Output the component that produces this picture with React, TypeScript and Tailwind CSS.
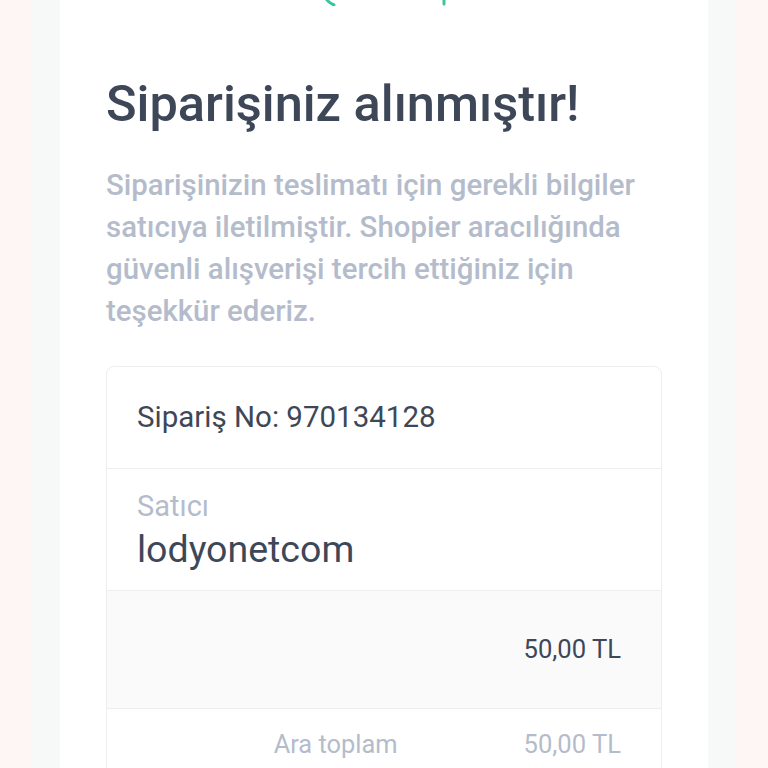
const ORDER = {
  no: '970134128',
  seller: 'lodyonetcom',
  price: '50,00 TL',
  subtotal: '50,00 TL',
};

function Logo() {
  return (
    <svg width="140" height="40" viewBox="0 0 140 40" className="-mt-[34px] mx-auto block" aria-hidden>
      <path d="M10 20 Q8 34 20 39" fill="none" stroke="#3cc3a0" strokeWidth="3" strokeLinecap="round" />
      <path d="M130 32 L130 38" fill="none" stroke="#3cc3a0" strokeWidth="3" strokeLinecap="round" />
    </svg>
  );
}

export default function App() {
  return (
    <div className="min-h-[768px] bg-[#fdf6f5] px-[32px] font-['Roboto',sans-serif]">
      <div className="min-h-[768px] bg-[#f6f9f8] px-[28px]">
        <div className="min-h-[768px] bg-white px-[46px] overflow-hidden">
          <Logo />
          <h1 className="mt-[68px] text-[50.5px] leading-[60px] font-medium text-[#3e4757] whitespace-nowrap">
            Siparişiniz alınmıştır!
          </h1>
          <p className="mt-[30px] text-[29.4px] leading-[42px] font-medium text-[#b4bccb]">
            Siparişinizin teslimatı için gerekli bilgiler satıcıya iletilmiştir. Shopier aracılığında güvenli alışverişi tercih ettiğiniz için teşekkür ederiz.
          </p>

          <div className="mt-[34px] border border-[#eceef1] rounded-[8px] overflow-hidden">
            <div className="h-[102px] px-[30px] flex items-center border-b border-[#eceef1]">
              <span className="text-[29.5px] text-[#3e4757]">Sipariş No: {ORDER.no}</span>
            </div>
            <div className="h-[122px] px-[30px] pt-[19px] border-b border-[#eceef1]">
              <div className="text-[29px] leading-[36px] text-[#b4bccb]">Satıcı</div>
              <div className="text-[37.5px] leading-[50px] text-[#3e4757]">{ORDER.seller}</div>
            </div>
            <div className="h-[118px] px-[40px] flex items-center justify-end bg-[#fafafa] border-b border-[#eceef1]">
              <span className="text-[25.6px] text-[#3e4757]">{ORDER.price}</span>
            </div>
            <div className="h-[80px] px-[40px] pt-[19px] flex justify-end gap-[126px]">
              <span className="text-[25.4px] leading-[32px] text-[#b4bccb]">Ara toplam</span>
              <span className="text-[25.6px] leading-[32px] text-[#b4bccb]">{ORDER.subtotal}</span>
            </div>
          </div>
        </div>
      </div>
    </div>
  );
}
